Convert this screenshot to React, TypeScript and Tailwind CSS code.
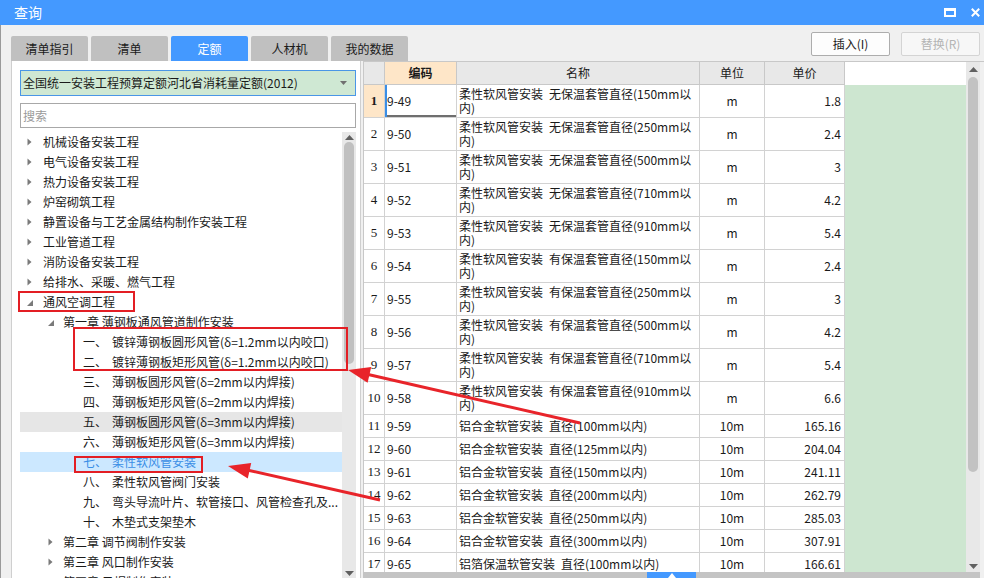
import React from 'react';

type Node = { l: 0 | 1 | 2; t: string; n?: string; st?: 'c' | 'e'; hl?: 'hover' | 'sel' };

const tree: Node[] = [
  { l: 0, t: '机械设备安装工程', st: 'c' },
  { l: 0, t: '电气设备安装工程', st: 'c' },
  { l: 0, t: '热力设备安装工程', st: 'c' },
  { l: 0, t: '炉窑砌筑工程', st: 'c' },
  { l: 0, t: '静置设备与工艺金属结构制作安装工程', st: 'c' },
  { l: 0, t: '工业管道工程', st: 'c' },
  { l: 0, t: '消防设备安装工程', st: 'c' },
  { l: 0, t: '给排水、采暖、燃气工程', st: 'c' },
  { l: 0, t: '通风空调工程', st: 'e' },
  { l: 1, t: '第一章 薄钢板通风管道制作安装', st: 'e' },
  { l: 2, n: '一、', t: '镀锌薄钢板圆形风管(δ=1.2mm以内咬口)' },
  { l: 2, n: '二、', t: '镀锌薄钢板矩形风管(δ=1.2mm以内咬口)' },
  { l: 2, n: '三、', t: '薄钢板圆形风管(δ=2mm以内焊接)' },
  { l: 2, n: '四、', t: '薄钢板矩形风管(δ=2mm以内焊接)' },
  { l: 2, n: '五、', t: '薄钢板圆形风管(δ=3mm以内焊接)', hl: 'hover' },
  { l: 2, n: '六、', t: '薄钢板矩形风管(δ=3mm以内焊接)' },
  { l: 2, n: '七、', t: '柔性软风管安装', hl: 'sel' },
  { l: 2, n: '八、', t: '柔性软风管阀门安装' },
  { l: 2, n: '九、', t: '弯头导流叶片、软管接口、风管检查孔及...' },
  { l: 2, n: '十、', t: '木垫式支架垫木' },
  { l: 1, t: '第二章 调节阀制作安装', st: 'c' },
  { l: 1, t: '第三章 风口制作安装', st: 'c' },
  { l: 1, t: '第四章 风帽制作安装', st: 'c' },
];

type Row = [string, string, string, string, string];
const rows: Row[] = [
  ['9-49', '柔性软风管安装 无保温套管直径(150mm以', '内)', 'm', '1.8'],
  ['9-50', '柔性软风管安装 无保温套管直径(250mm以', '内)', 'm', '2.4'],
  ['9-51', '柔性软风管安装 无保温套管直径(500mm以', '内)', 'm', '3'],
  ['9-52', '柔性软风管安装 无保温套管直径(710mm以', '内)', 'm', '4.2'],
  ['9-53', '柔性软风管安装 无保温套管直径(910mm以', '内)', 'm', '5.4'],
  ['9-54', '柔性软风管安装 有保温套管直径(150mm以', '内)', 'm', '2.4'],
  ['9-55', '柔性软风管安装 有保温套管直径(250mm以', '内)', 'm', '3'],
  ['9-56', '柔性软风管安装 有保温套管直径(500mm以', '内)', 'm', '4.2'],
  ['9-57', '柔性软风管安装 有保温套管直径(710mm以', '内)', 'm', '5.4'],
  ['9-58', '柔性软风管安装 有保温套管直径(910mm以', '内)', 'm', '6.6'],
  ['9-59', '铝合金软管安装 直径(100mm以内)', '', '10m', '165.16'],
  ['9-60', '铝合金软管安装 直径(125mm以内)', '', '10m', '204.04'],
  ['9-61', '铝合金软管安装 直径(150mm以内)', '', '10m', '241.11'],
  ['9-62', '铝合金软管安装 直径(200mm以内)', '', '10m', '262.79'],
  ['9-63', '铝合金软管安装 直径(250mm以内)', '', '10m', '285.03'],
  ['9-64', '铝合金软管安装 直径(300mm以内)', '', '10m', '307.91'],
  ['9-65', '铝箔保温软管安装 直径(100mm以内)', '', '10m', '166.61'],
];

function Tri({ st }: { st?: 'c' | 'e' }) {
  if (st === 'c')
    return (
      <svg width="5" height="8" viewBox="0 0 5 8">
        <polygon points="0.5,0.5 4.5,4 0.5,7.5" fill="#7a7a7a" />
      </svg>
    );
  if (st === 'e')
    return (
      <svg width="6" height="6" viewBox="0 0 6 6" className="mt-[2px]">
        <polygon points="6,0 6,6 0,6" fill="#7a7a7a" />
      </svg>
    );
  return null;
}

function UpArrow() {
  return (
    <svg width="9" height="5" viewBox="0 0 9 5">
      <polygon points="0,5 4.5,0 9,5" fill="#606060" />
    </svg>
  );
}
function DownArrow() {
  return (
    <svg width="9" height="5" viewBox="0 0 9 5">
      <polygon points="0,0 4.5,5 9,0" fill="#606060" />
    </svg>
  );
}

const tabs = ['清单指引', '清单', '定额', '人材机', '我的数据'];

export default function App() {
  return (
    <div className="relative w-[984px] h-[578px] overflow-hidden bg-[#f0f0f0] font-['Noto_Sans_CJK_SC',sans-serif] text-[#1a1a1a] flex flex-col">
      {/* Title bar */}
      <div className="h-[25px] shrink-0 bg-[#4499ff] flex items-center justify-between pl-[14px] pr-[4px]">
        <span className="text-white text-[14px] leading-[25px]">查询</span>
        <div className="flex items-center gap-[15px]">
          <svg width="12" height="9" viewBox="0 0 12 9">
            <rect x="1" y="1.5" width="10" height="6.5" fill="none" stroke="#fff" strokeWidth="2" />
            <rect x="0" y="0" width="12" height="3" fill="#fff" />
          </svg>
          <svg width="9" height="9" viewBox="0 0 9 9">
            <path d="M0.8 0.8 L8.2 8.2 M8.2 0.8 L0.8 8.2" stroke="#fff" strokeWidth="2" />
          </svg>
        </div>
      </div>

      {/* Toolbar */}
      <div className="h-[36px] shrink-0 flex justify-between border-l border-[#9a9a9a]">
        <div className="self-end flex gap-[3px] pl-[10px]">
          {tabs.map((t, i) => (
            <div
              key={t}
              className={
                i === 2
                  ? 'w-[77px] h-[25px] rounded-t-[2px] bg-[#4499ff] text-white text-[12px] flex items-center justify-center'
                  : 'w-[77px] h-[25px] rounded-t-[2px] bg-[#c0c0c0] text-[#1a1a1a] text-[12px] flex items-center justify-center'
              }
            >
              {t}
            </div>
          ))}
        </div>
        <div className="flex gap-[11px] mt-[7px] pr-[4px]">
          <div className="w-[79px] h-[24px] rounded-[2px] border border-[#adadad] bg-[#fdfdfd] text-[12px] flex items-center justify-center">
            插入(I)
          </div>
          <div className="w-[79px] h-[24px] rounded-[2px] border border-[#d4d4d4] bg-[#f7f7f7] text-[12px] text-[#b4b4b4] flex items-center justify-center">
            替换(R)
          </div>
        </div>
      </div>

      {/* Body */}
      <div className="flex-1 flex border-l border-[#9a9a9a] pl-[10px] min-h-0">
        {/* Left panel */}
        <div className="w-[350px] shrink-0 bg-white border-l border-r border-[#cfcfcf] flex flex-col pl-[8px] pr-[4px]">
          <div className="mt-[9px] h-[26px] border border-[#4a96e6] bg-[#cfe8d3] flex items-center justify-between pl-[2px] pr-[8px] text-[12px]">
            <span>全国统一安装工程预算定额河北省消耗量定额(2012)</span>
            <svg width="7" height="4" viewBox="0 0 7 4">
              <polygon points="0,0 7,0 3.5,4" fill="#707070" />
            </svg>
          </div>
          <div className="mt-[7px] h-[25px] border border-[#a8a8a8] bg-white flex items-center pl-[2px] text-[12px] text-[#9a9a9a]">
            搜索
          </div>
          <div className="mt-[4px] flex-1 flex min-h-0">
            <div className="w-[322px] overflow-hidden text-[12px]">
              {tree.map((n, i) => {
                const bg = n.hl === 'hover' ? 'bg-[#e6e6e6]' : n.hl === 'sel' ? 'bg-[#cce8ff] text-[#3a8ee6]' : '';
                if (n.l === 2)
                  return (
                    <div key={i} className={`h-[20px] flex items-center whitespace-nowrap pl-[63px] ${bg}`}>
                      <span className="w-[29px] shrink-0">{n.n}</span>
                      <span>{n.t}</span>
                    </div>
                  );
                return (
                  <div
                    key={i}
                    className={`h-[20px] flex items-center whitespace-nowrap ${n.l === 0 ? 'pl-[7px]' : 'pl-[28px]'} ${bg}`}
                  >
                    <span className={`${n.l === 0 ? 'w-[16px]' : 'w-[15px]'} shrink-0 flex items-center`}>
                      <Tri st={n.st} />
                    </span>
                    <span>{n.t}</span>
                  </div>
                );
              })}
            </div>
            <div className="w-[14px] shrink-0 bg-[#e8e8e8] flex flex-col items-center">
              <div className="h-[10px] flex items-center justify-center">
                <UpArrow />
              </div>
              <div className="w-[10px] h-[222px] rounded-full bg-[#c0c0c0]" />
              <div className="flex-1" />
              <div className="h-[10px] flex items-center justify-center">
                <DownArrow />
              </div>
            </div>
          </div>
        </div>

        {/* Table panel */}
        <div className="ml-[2px] w-[621px] shrink-0 flex flex-col">
          <div className="h-[511px] shrink-0 flex border-t border-[#c8c8c8]">
            <div className="w-[482px] shrink-0 border-l border-[#c8c8c8] bg-white overflow-hidden text-[12px]">
              {/* header */}
              <div className="flex h-[23px] bg-[#e8e8e8]">
                <div className="w-[21px] border-r border-b border-[#c8c8c8]" />
                <div className="w-[72px] border-r border-b border-[#c8c8c8] bg-[#fee6c8] font-bold flex items-center justify-center">
                  编码
                </div>
                <div className="w-[243px] border-r border-b border-[#c8c8c8] flex items-center justify-center">名称</div>
                <div className="w-[65px] border-r border-b border-[#c8c8c8] flex items-center justify-center">单位</div>
                <div className="w-[80px] border-r border-b border-[#c8c8c8] flex items-center justify-center">单价</div>
              </div>
              {rows.map((r, i) => {
                const tall = i < 10;
                const h = tall ? 'h-[33px]' : 'h-[23px]';
                const first = i === 0;
                return (
                  <div key={i} className={`flex ${h} shrink-0`}>
                    <div
                      className={`w-[21px] border-r border-b border-[#d2d2d2] flex items-center justify-center font-['Liberation_Serif',serif] text-[13px] ${
                        first ? 'bg-[#fee6c8] font-bold' : ''
                      }`}
                    >
                      {i + 1}
                    </div>
                    <div
                      className={`w-[72px] border-r border-b border-[#d2d2d2] flex items-center pl-[2px] ${
                        first ? 'shadow-[inset_2px_0_0_#3a8ee6,inset_0_-2px_0_#6e6e6e]' : ''
                      }`}
                    >
                      {r[0]}
                    </div>
                    <div className="w-[243px] border-r border-b border-[#d2d2d2] flex flex-col justify-center pl-[2px] leading-[14px] whitespace-nowrap overflow-hidden">
                      <span>{r[1].replace(' ', '\u2002')}</span>
                      {r[2] && <span>{r[2]}</span>}
                    </div>
                    <div className="w-[65px] border-r border-b border-[#d2d2d2] flex items-center justify-center">{r[3]}</div>
                    <div className="w-[80px] border-r border-b border-[#d2d2d2] flex items-center justify-end pr-[3px]">
                      {r[4]}
                    </div>
                  </div>
                );
              })}
            </div>
            <div className="w-[121px] shrink-0 flex flex-col">
              <div className="h-[23px] bg-white" />
              <div className="flex-1 bg-[#cde6d0]" />
            </div>
            <div className="w-[14px] shrink-0 bg-[#e8e8e8] flex flex-col items-center">
              <div className="h-[15px] flex items-center justify-center">
                <UpArrow />
              </div>
              <div className="w-[10px] h-[395px] rounded-full bg-[#c2c2c2]" />
              <div className="flex-1" />
              <div className="h-[12px] flex items-center justify-center">
                <DownArrow />
              </div>
            </div>
            <div className="w-[4px] shrink-0 bg-[#f0f0f0]" />
          </div>
          <div className="h-[6px] shrink-0 flex">
            <div className="w-[284px] bg-[#c4c4c4]" />
            <div className="w-[49px] bg-[#4499ff] flex justify-center pt-[1px]">
              <svg width="8" height="5" viewBox="0 0 8 5">
                <polygon points="0,5 4,0 8,5" fill="#fff" />
              </svg>
            </div>
            <div className="w-[284px] bg-[#c4c4c4]" />
          </div>
        </div>
      </div>

      {/* Annotations overlay */}
      <svg className="absolute left-0 top-0 pointer-events-none" width="984" height="578" viewBox="0 0 984 578">
        <rect x="19" y="292" width="115" height="19" fill="none" stroke="#e31e24" strokeWidth="2" />
        <rect x="74" y="328" width="273" height="42" fill="none" stroke="#e31e24" strokeWidth="2" />
        <rect x="75" y="457" width="127" height="15" fill="none" stroke="#e31e24" strokeWidth="2" />
        <line x1="580" y1="423" x2="366" y2="374" stroke="#e8242a" strokeWidth="3" />
        <polygon points="348,370 371.2,367.1 367.6,382.7" fill="#e8242a" />
        <line x1="380" y1="500" x2="247" y2="470" stroke="#e8242a" strokeWidth="3" />
        <polygon points="228,466 251.2,463 247.8,478.6" fill="#e8242a" />
      </svg>
    </div>
  );
}
